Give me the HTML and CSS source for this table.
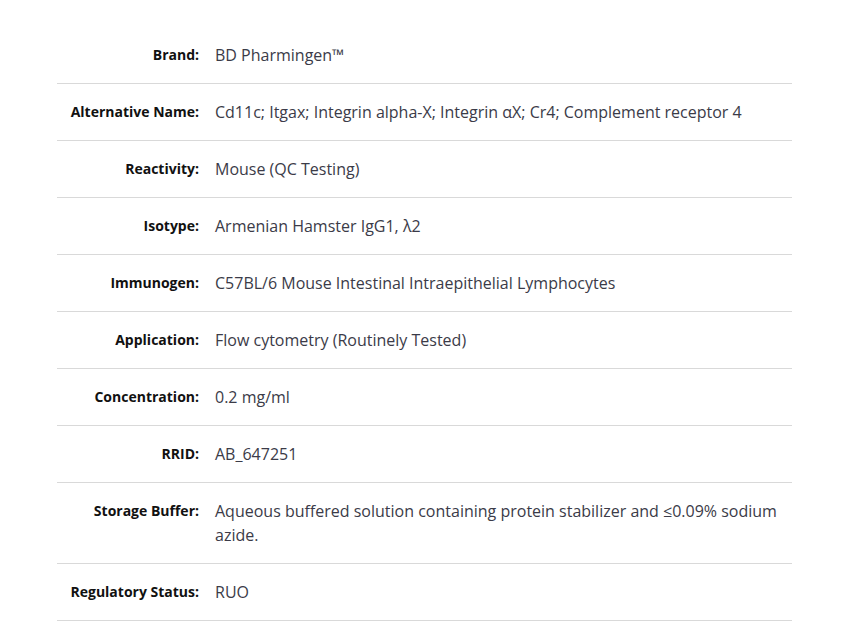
FILE: index.html
```html
<!DOCTYPE html>
<html>
<head>
<meta charset="utf-8">
<link rel="stylesheet" href="styles.css">
</head>
<body>
<div class="specs">
  <div class="row"><div class="label">Brand:</div><div class="value">BD Pharmingen™</div></div>
  <div class="row"><div class="label">Alternative Name:</div><div class="value">Cd11c; Itgax; Integrin alpha-X; Integrin αX; Cr4; Complement receptor 4</div></div>
  <div class="row"><div class="label">Reactivity:</div><div class="value">Mouse (QC Testing)</div></div>
  <div class="row"><div class="label">Isotype:</div><div class="value">Armenian Hamster IgG1, λ2</div></div>
  <div class="row"><div class="label">Immunogen:</div><div class="value">C57BL/6 Mouse Intestinal Intraepithelial Lymphocytes</div></div>
  <div class="row"><div class="label">Application:</div><div class="value">Flow cytometry (Routinely Tested)</div></div>
  <div class="row"><div class="label">Concentration:</div><div class="value">0.2 mg/ml</div></div>
  <div class="row"><div class="label">RRID:</div><div class="value">AB_647251</div></div>
  <div class="row"><div class="label">Storage Buffer:</div><div class="value">Aqueous buffered solution containing protein stabilizer and ≤0.09% sodium azide.</div></div>
  <div class="row"><div class="label">Regulatory Status:</div><div class="value">RUO</div></div>
</div>
</body>
</html>
```
FILE: styles.css
```css
html, body {
  margin: 0;
  padding: 0;
  background: #ffffff;
}
body {
  padding: 27px 49px 0 57px;
  font-family: "Open Sans", sans-serif;
}
.specs {
  width: 735px;
}
.row {
  display: flex;
  gap: 16px;
  padding: 16px 0;
  border-bottom: 1px solid #d9d9d9;
  line-height: 24px;
}
.label {
  flex: 0 0 142px;
  text-align: right;
  font-weight: 700;
  font-size: 14px;
  color: #111111;
}
.value {
  flex: 1;
  font-size: 16px;
  color: #3b3b48;
  padding-right: 8px;
}
```
